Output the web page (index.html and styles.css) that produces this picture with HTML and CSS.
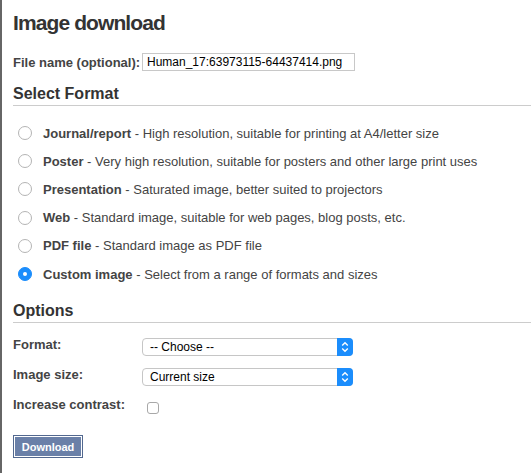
FILE: index.html
```html
<!DOCTYPE html>
<html>
<head>
<meta charset="utf-8">
<link rel="stylesheet" href="styles.css">
</head>
<body>
<div class="page">
  <h1 class="title">Image download</h1>
  <div class="filename-row">
    <label class="lbl" for="fn">File name (optional):</label>
    <input class="text-input" id="fn" type="text" value="Human_17:63973115-64437414.png">
  </div>

  <h2 class="section">Select Format</h2>
  <ul class="formats">
    <li class="fmt"><span class="radio"></span><span class="fmt-text"><b>Journal/report</b> - High resolution, suitable for printing at A4/letter size</span></li>
    <li class="fmt"><span class="radio"></span><span class="fmt-text"><b>Poster</b> - Very high resolution, suitable for posters and other large print uses</span></li>
    <li class="fmt"><span class="radio"></span><span class="fmt-text"><b>Presentation</b> - Saturated image, better suited to projectors</span></li>
    <li class="fmt"><span class="radio"></span><span class="fmt-text"><b>Web</b> - Standard image, suitable for web pages, blog posts, etc.</span></li>
    <li class="fmt"><span class="radio"></span><span class="fmt-text"><b>PDF file</b> - Standard image as PDF file</span></li>
    <li class="fmt"><span class="radio checked"></span><span class="fmt-text"><b>Custom image</b> - Select from a range of formats and sizes</span></li>
  </ul>

  <h2 class="section options-head">Options</h2>
  <div class="options">
    <div class="opt-label">Format:</div>
    <div class="select"><span class="select-text">-- Choose --</span><span class="select-btn"><svg width="8" height="12" viewBox="0 0 8 12"><path d="M1.2 4.6 L4 1.8 L6.8 4.6 M1.2 7.4 L4 10.2 L6.8 7.4" fill="none" stroke="#fff" stroke-width="1.4"/></svg></span></div>
    <div class="opt-label">Image size:</div>
    <div class="select"><span class="select-text">Current size</span><span class="select-btn"><svg width="8" height="12" viewBox="0 0 8 12"><path d="M1.2 4.6 L4 1.8 L6.8 4.6 M1.2 7.4 L4 10.2 L6.8 7.4" fill="none" stroke="#fff" stroke-width="1.4"/></svg></span></div>
    <div class="opt-label">Increase contrast:</div>
    <div class="check-cell"><span class="checkbox"></span></div>
  </div>

  <button class="download" type="button">Download</button>
</div>
</body>
</html>
```

FILE: styles.css
```css
html, body {
  margin: 0;
  padding: 0;
  background: #fff;
}
body {
  font-family: "Liberation Sans", Arial, Helvetica, sans-serif;
  font-size: 13px;
  color: #333;
  height: 473px;
  overflow: hidden;
}
.page {
  border-left: 2px solid #666;
  height: 473px;
  box-sizing: border-box;
  padding: 11px 0 0 11px;
}
.title {
  margin: 0;
  font-size: 21px;
  font-weight: bold;
  line-height: 24px;
  letter-spacing: -0.9px;
  color: #333;
}
.filename-row {
  display: flex;
  align-items: center;
  margin-top: 18px;
}
.lbl {
  font-weight: bold;
  width: 129px;
  color: #444;
}
.text-input {
  width: 213px;
  height: 18px;
  box-sizing: border-box;
  border: 1px solid #c8c8c8;
  padding: 0 4px;
  font-family: "Liberation Sans", Arial, sans-serif;
  font-size: 12px;
  color: #000;
  margin: 0;
  outline: none;
}
.section {
  margin: 0;
  font-size: 16px;
  font-weight: bold;
  line-height: 20px;
  color: #333;
  border-bottom: 1px solid #ccc;
  padding-bottom: 1px;
}
.filename-row + .section {
  margin-top: 13px;
}
.formats {
  list-style: none;
  margin: 13px 0 0 0;
  padding: 0;
}
.fmt {
  display: flex;
  align-items: center;
  height: 28.2px;
  color: #444;
}
.fmt b { color: #444; }
.radio {
  width: 12px;
  height: 12px;
  border: 1px solid #b4b4b4;
  border-radius: 50%;
  margin-left: 5px;
  margin-right: 11px;
  box-sizing: content-box;
  background: #fff;
  flex: none;
}
.radio.checked {
  background: #1b8dfc;
  border-color: #1b8dfc;
  position: relative;
}
.radio.checked::after {
  content: "";
  position: absolute;
  width: 4px;
  height: 4px;
  border-radius: 50%;
  background: #fff;
  left: 4px;
  top: 4px;
}
.options-head {
  margin-top: 13px;
}
.options {
  display: grid;
  grid-template-columns: 129px 211px;
  grid-auto-rows: 30px;
  margin-top: 11px;
}
.opt-label {
  font-weight: bold;
  color: #444;
  padding-top: 3px;
}
.select {
  position: relative;
  height: 18px;
  box-sizing: border-box;
  margin-top: 4px;
  border: 1px solid #c6c6c6;
  border-radius: 4px;
  background: #fff;
  display: flex;
  align-items: center;
  padding-left: 7px;
  font-size: 12px;
  color: #000;
}
.select-btn {
  position: absolute;
  right: -1px;
  top: -1px;
  width: 16px;
  height: 18px;
  background: #1b8dfc;
  border-radius: 0 4px 4px 0;
  display: flex;
  align-items: center;
  justify-content: center;
}
.check-cell {
  display: flex;
}
.checkbox {
  width: 10px;
  height: 10px;
  border: 1px solid #a8a8a8;
  border-radius: 3px;
  margin-left: 5px;
  margin-top: 8px;
  background: #fff;
}
.download {
  margin-top: 11px;
  height: 23px;
  width: 70px;
  padding: 0;
  background: #6a80a8;
  border: 1px solid #52688f;
  box-shadow: inset 0 0 0 1px #fff;
  color: #fff;
  font-family: "Liberation Sans", Arial, sans-serif;
  font-size: 11px;
  font-weight: bold;
}
```
